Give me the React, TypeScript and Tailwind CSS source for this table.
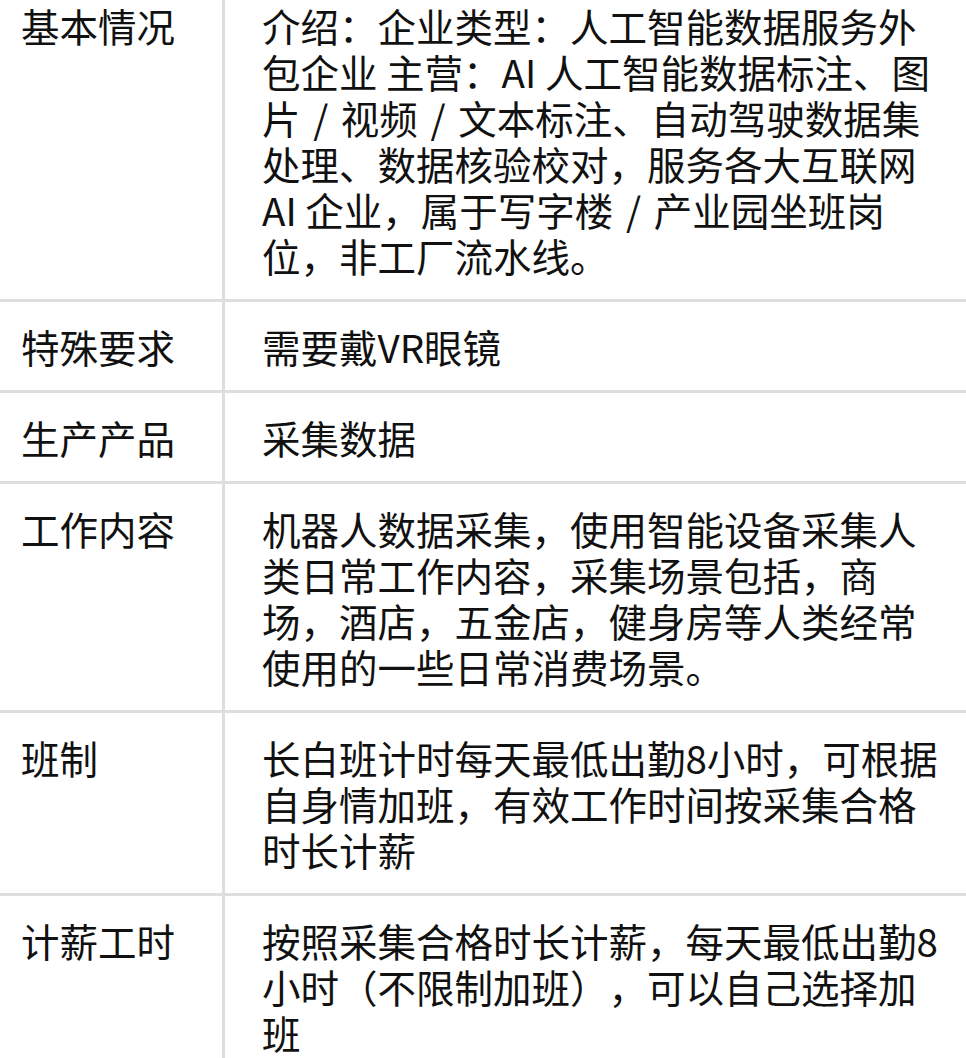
import { Fragment } from "react"

const rows: { label: string; content: string }[] = [
  {
    label: "基本情况",
    content:
      "介绍：企业类型：人工智能数据服务外包企业 主营：AI 人工智能数据标注、图片 / 视频 / 文本标注、自动驾驶数据集处理、数据核验校对，服务各大互联网 AI 企业，属于写字楼 / 产业园坐班岗位，非工厂流水线。",
  },
  { label: "特殊要求", content: "需要戴VR眼镜" },
  { label: "生产产品", content: "采集数据" },
  {
    label: "工作内容",
    content:
      "机器人数据采集，使用智能设备采集人类日常工作内容，采集场景包括，商场，酒店，五金店，健身房等人类经常使用的一些日常消费场景。",
  },
  {
    label: "班制",
    content: "长白班计时每天最低出勤8小时，可根据自身情加班，有效工作时间按采集合格时长计薪",
  },
  {
    label: "计薪工时",
    content: "按照采集合格时长计薪，每天最低出勤8小时（不限制加班），可以自己选择加班",
  },
]

// the slashes sit wider apart in the original font
function Content({ text }: { text: string }) {
  const parts = text.split(" / ")
  return (
    <>
      {parts.map((part, i) => (
        <Fragment key={i}>
          {i > 0 && (
            <>
              {" "}
              <span className="mx-[4px]">/</span>{" "}
            </>
          )}
          {part}
        </Fragment>
      ))}
    </>
  )
}

export default function App() {
  return (
    <div className="h-[1058px] w-[966px] overflow-hidden bg-white font-['Noto_Sans_CJK_SC',sans-serif] text-[38.5px] leading-[46px] text-[#111] [text-spacing-trim:space-all]">
      <div className="-mt-[19px] flex flex-col">
        {rows.map((row) => (
          <div key={row.label} className="flex border-b-[3px] border-[#dedede]">
            <div className="w-[225px] shrink-0 border-r-[3px] border-[#dedede] py-[21px] pl-[21px]">
              {row.label}
            </div>
            <div className="min-w-0 flex-1 py-[21px] pl-[37px] pr-[18px]">
              <Content text={row.content} />
            </div>
          </div>
        ))}
      </div>
    </div>
  )
}
